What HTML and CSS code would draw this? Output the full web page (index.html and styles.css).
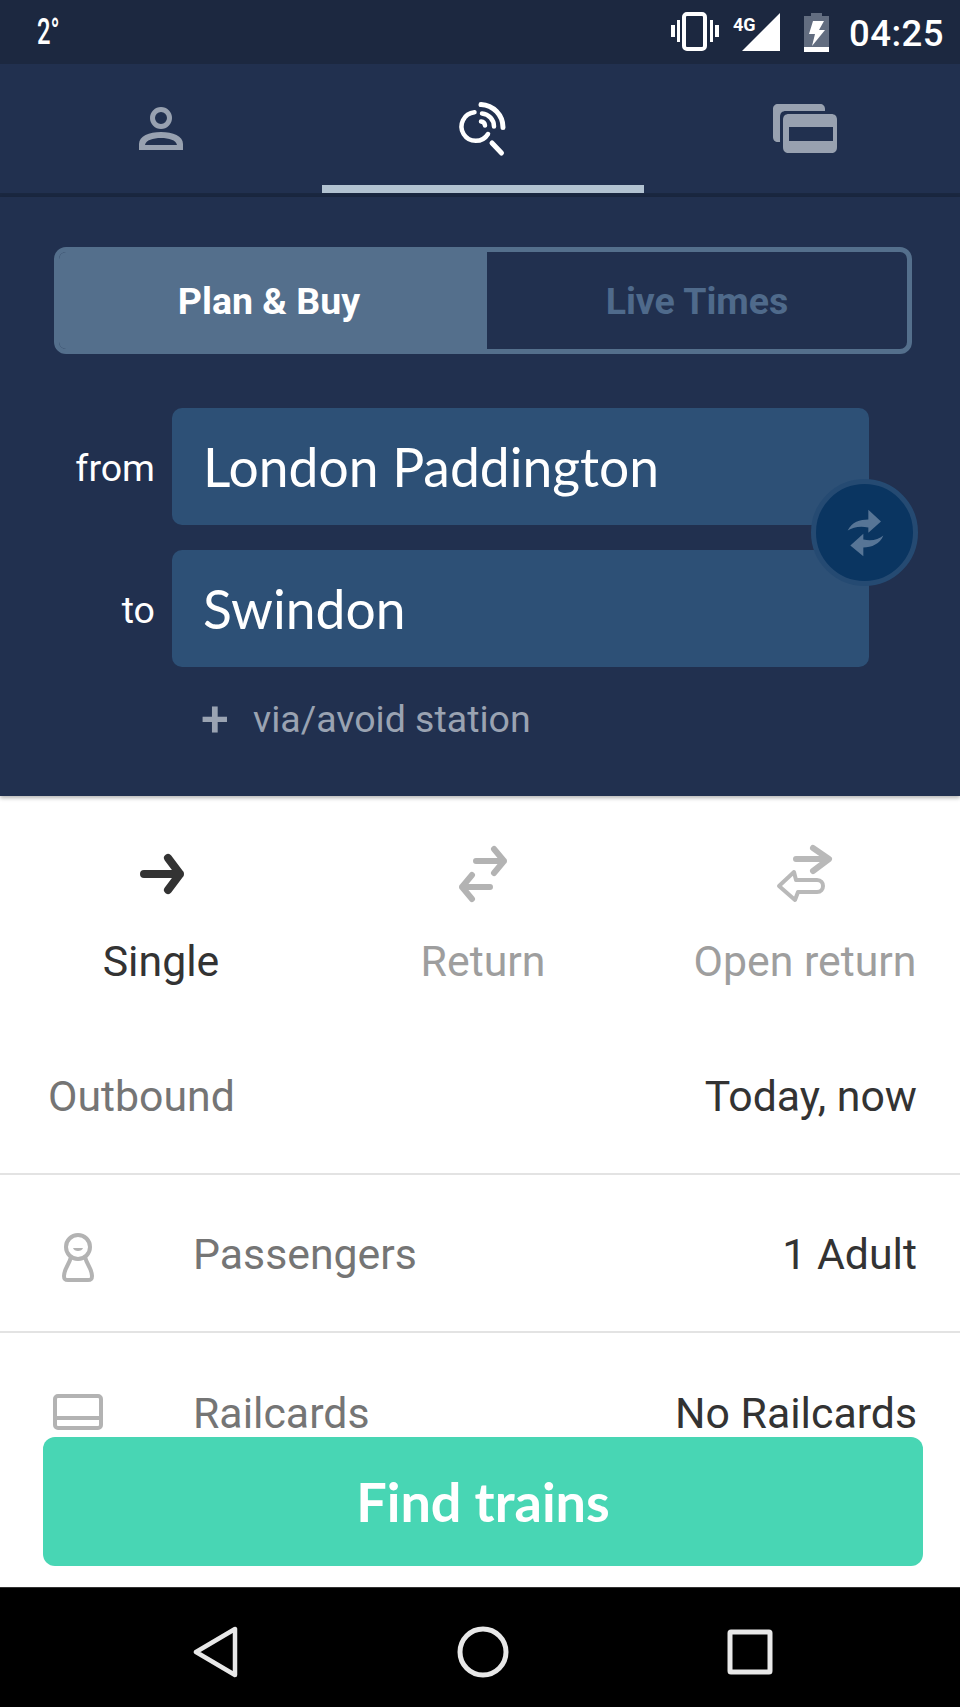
FILE: index.html
```html
<!DOCTYPE html>
<html lang="en">
<head>
  <meta charset="UTF-8">
  <meta name="viewport" content="width=device-width, initial-scale=1.0">
  <title>Find trains</title>
  <link rel="stylesheet" href="styles.css">
</head>
<body>
  <div class="screen">
    <div class="status-bar">
      <span class="temp">2°</span>
      <div class="status-right">
        <svg class="ic-vibrate" width="50" height="40" viewBox="0 0 50 40">
          <rect x="14" y="2" width="21" height="35" rx="3" fill="none" stroke="#fff" stroke-width="4"/>
          <path d="M1 13h4v12H1zM7 8h3v22H7zM40 8h3v22h-3zM45 13h4v12h-4z" fill="#fff"/>
        </svg>
        <div class="signal">
          <span class="net">4G</span>
          <svg width="38" height="38" viewBox="0 0 38 38"><path d="M38 0v38H0z" fill="#fff"/></svg>
        </div>
        <svg class="ic-battery" width="25" height="39" viewBox="0 0 25 39">
          <path d="M7 0h11v3h7v32H0V3h7z" fill="#626d80"/>
          <path d="M0 34h25v5H0z" fill="#fff"/>
          <path d="M9 8h11l-5 9h6L8 33l3-12H5z" fill="#fff"/>
        </svg>
        <span class="clock">04:25</span>
      </div>
    </div>

    <nav class="tabs">
      <div class="tab">
        <svg width="60" height="60" viewBox="0 0 60 60">
          <circle cx="30" cy="22" r="8.5" fill="none" stroke="#98a1b0" stroke-width="5"/>
          <path fill-rule="evenodd" d="M8 54v-6c0-8 10-12 22-12s22 4 22 12v6zM14 49h32c-1-5-8-7-16-7s-15 2-16 7z" fill="#98a1b0"/>
        </svg>
      </div>
      <div class="tab tab-active">
        <svg width="60" height="60" viewBox="0 0 60 60" fill="none" stroke="#fff" stroke-linecap="round">
          <path d="M21.5 13.3A14.3 14.3 0 1 0 35 35" stroke-width="4.5"/>
          <path d="M39 44L48.500 54" stroke-width="5"/>
          <path d="M28 5.5A23 23 0 0 1 50 28.5" stroke-width="5"/>
          <path d="M29 14.5A13 13 0 0 1 41 27.5" stroke-width="4.5"/>
          <path d="M28 22.5A4.5 4.5 0 0 1 32 26.5" stroke-width="4.5"/>
        </svg>
      </div>
      <div class="tab tab-cards">
        <svg width="66" height="50" viewBox="0 0 66 50">
          <path d="M6 0h42c3 0 5 2 5 5v2H14c-4 0-6 2-6 6v25H6c-3 0-5-2-5-5V5c0-3 2-5 5-5z" fill="#98a1b0"/>
          <path fill-rule="evenodd" d="M17 10h42c4 0 6 2 6 6v27c0 4-2 6-6 6H17c-4 0-6-2-6-6V16c0-4 2-6 6-6zM17 23v14h44V23z" fill="#98a1b0"/>
        </svg>
      </div>
    </nav>
    <div class="tabs-edge"></div>

    <section class="search-panel">
      <div class="segment">
        <div class="segment-item segment-on">Plan &amp; Buy</div>
        <div class="segment-item">Live Times</div>
      </div>

      <div class="stations">
        <div class="station-row">
          <span class="station-label">from</span>
          <div class="station-field">London Paddington</div>
        </div>
        <div class="station-row">
          <span class="station-label">to</span>
          <div class="station-field">Swindon</div>
        </div>
        <div class="swap">
          <svg width="40" height="52" viewBox="610 195 120 155">
            <path d="M618 265c12-25 37-33 62-33v-29l38 35-38 34v-16c-25-6-45-1-62 9z" fill="#577596"/>
            <path d="M725 280c-10 25-35 36-60 36v26l-39-32 39-35v17c25 6 45 0 60-12z" fill="#577596"/>
          </svg>
        </div>
      </div>

      <div class="via">
        <span class="via-plus">+</span>
        <span>via/avoid station</span>
      </div>
    </section>

    <main class="content">
      <div class="trip-types">
        <div class="trip-type trip-on">
          <svg width="60" height="60" viewBox="0 0 60 60" fill="none" stroke="#333" stroke-width="8" stroke-linecap="round" stroke-linejoin="round">
            <path d="M13 30h36M37 14l12 16-12 16" />
          </svg>
          <span>Single</span>
        </div>
        <div class="trip-type">
          <svg width="60" height="60" viewBox="0 0 60 60" fill="none" stroke="#b3b3b3" stroke-width="6" stroke-linecap="round" stroke-linejoin="round">
            <path d="M23 17h28M41 5l10 12-10 12M37 43H9M19 31L9 43l10 12" />
          </svg>
          <span>Return</span>
        </div>
        <div class="trip-type">
          <svg width="60" height="60" viewBox="0 0 60 60" fill="none" stroke="#b9b9b9" stroke-linecap="round" stroke-linejoin="round">
            <path d="M21 15h32M38 4l16 11-16 12" stroke-width="6"/>
            <path d="M19 28L4 42l16 14 3-8h19c8 0 8-12 0-12H21z" stroke-width="4"/>
          </svg>
          <span>Open return</span>
        </div>
      </div>

      <div class="row row-first">
        <span class="row-label">Outbound</span>
        <span class="row-value">Today, now</span>
      </div>
      <div class="row">
        <div class="row-icon">
          <svg class="ic-passenger" width="36" height="49" viewBox="0 0 36 49" fill="none" stroke="#b3b3b3" stroke-width="4">
            <circle cx="18" cy="14" r="12"/>
            <path d="M11 24C9 32 4 36 4 43c0 3 1 4 4 4h20c3 0 4-1 4-4 0-7-5-11-7-19"/>
            <path d="M13 15h10c-1 4-9 4-10 0z" fill="#b3b3b3" stroke="none"/>
          </svg>
        </div>
        <span class="row-label">Passengers</span>
        <span class="row-value">1 Adult</span>
      </div>
      <div class="row row-last">
        <div class="row-icon">
          <svg width="50" height="36" viewBox="0 0 50 36" fill="none" stroke="#b3b3b3" stroke-width="4">
            <rect x="2" y="2" width="46" height="32" rx="3"/>
            <path d="M2 24h46"/>
          </svg>
        </div>
        <span class="row-label">Railcards</span>
        <span class="row-value">No Railcards</span>
      </div>

      <button class="find-btn" type="button">Find trains</button>
    </main>

    <div class="android-nav">
      <svg width="46" height="52" viewBox="0 0 46 52" fill="none" stroke="#e8e8e8" stroke-width="4.5" stroke-linejoin="round">
        <path d="M42 3v46L3 26z"/>
      </svg>
      <svg width="52" height="52" viewBox="0 0 52 52" fill="none" stroke="#e8e8e8" stroke-width="5">
        <circle cx="26" cy="26" r="23"/>
      </svg>
      <svg width="46" height="46" viewBox="0 0 46 46" fill="none" stroke="#e8e8e8" stroke-width="5" stroke-linejoin="round">
        <rect x="3" y="3" width="40" height="40" rx="1"/>
      </svg>
    </div>
  </div>
</body>
</html>
```

FILE: styles.css
```css
html, body {
  margin: 0;
  padding: 0;
}
body {
  font-family: Roboto, "Liberation Sans", sans-serif;
  background-color: #fff;
}
.screen {
  width: 960px;
  height: 1707px;
  display: flex;
  flex-direction: column;
  overflow: hidden;
}

/* status bar */
.status-bar {
  height: 64px;
  flex: none;
  background-color: #1c2840;
  color: #fff;
  display: flex;
  align-items: center;
  justify-content: space-between;
  padding: 0 16px 0 37px;
}
.temp {
  font-size: 36px;
  font-weight: 500;
  transform: scaleX(0.66);
  transform-origin: left center;
}
.status-right {
  display: flex;
  align-items: center;
}
.ic-vibrate {
  margin-right: 12px;
}
.signal {
  position: relative;
  width: 48px;
  height: 38px;
  display: flex;
  justify-content: flex-end;
  margin-right: 24px;
}
.net {
  position: absolute;
  left: 1px;
  top: 1px;
  font-size: 18px;
  font-weight: 700;
}
.ic-battery {
  margin-right: 20px;
}
.clock {
  font-size: 36.5px;
  font-weight: 500;
  letter-spacing: 0.5px;
  padding-top: 2px;
}

/* top tabs */
.tabs {
  height: 129px;
  flex: none;
  background-color: #21304f;
  display: grid;
  grid-template-columns: 322px 322px 316px;
}
.tab {
  display: flex;
  align-items: center;
  justify-content: center;
  box-sizing: border-box;
  padding-bottom: 6px;
}
.tab-active {
  border-bottom: 8px solid #b2c2d1;
  padding: 8px 0 0;
}
.tab-cards {
  padding: 0 0 0 6px;
}
.tabs-edge {
  height: 4px;
  flex: none;
  background-color: #1a2740;
}

/* search panel */
.search-panel {
  height: 599px;
  flex: none;
  box-sizing: border-box;
  background-color: #21304f;
  padding-top: 50px;
  box-shadow: 0 2px 4px rgba(0, 0, 0, 0.3);
  position: relative;
  z-index: 1;
}
.segment {
  width: 858px;
  height: 107px;
  margin-left: 54px;
  box-sizing: border-box;
  border: 5px solid #546f8c;
  border-radius: 12px;
  display: grid;
  grid-template-columns: 428px 1fr;
  overflow: hidden;
}
.segment-item {
  display: flex;
  align-items: center;
  justify-content: center;
  font-size: 37.5px;
  font-weight: 700;
  color: #4f6a8b;
}
.segment-on {
  background-color: #546f8c;
  color: #fff;
  padding-right: 8px;
}
.stations {
  position: relative;
  margin-top: 54px;
  display: flex;
  flex-direction: column;
  gap: 25px;
}
.station-row {
  display: flex;
  align-items: center;
}
.station-label {
  width: 155px;
  text-align: right;
  font-size: 37.5px;
  color: #fff;
  margin-right: 17px;
  padding-top: 2px;
}
.station-field {
  width: 697px;
  height: 117px;
  box-sizing: border-box;
  padding: 0 31px 2px;
  display: flex;
  align-items: center;
  background-color: #2d5076;
  border-radius: 10px;
  color: #fff;
  font-family: Lato, sans-serif;
  font-size: 53.4px;
}
.swap {
  position: absolute;
  top: 71px;
  right: 42px;
  width: 107px;
  height: 107px;
  box-sizing: border-box;
  border: 5px solid #254a72;
  border-radius: 50%;
  background-color: #0a3561;
  display: flex;
  align-items: center;
  justify-content: center;
}
.via {
  margin-top: 28px;
  padding-left: 201px;
  display: flex;
  align-items: center;
  color: #9aa3b2;
  font-size: 37.5px;
  line-height: 48px;
}
.via-plus {
  width: 52px;
  font-size: 50px;
  font-weight: 500;
}

/* white part */
.content {
  flex: 1;
  min-height: 0;
  position: relative;
  overflow: hidden;
}
.trip-types {
  display: grid;
  grid-template-columns: repeat(3, 322px);
  padding-top: 48px;
}
.trip-type {
  display: flex;
  flex-direction: column;
  align-items: center;
  color: #9e9e9e;
  font-size: 42.8px;
}
.trip-type span {
  margin-top: 32px;
  line-height: 50px;
}
.trip-on {
  color: #333;
}
.row {
  height: 158px;
  box-sizing: border-box;
  border-bottom: 2px solid #e3e3e3;
  display: flex;
  align-items: center;
  padding: 0 43px 0 48px;
  font-size: 42.8px;
}
.row-first {
  margin-top: 31px;
}
.row-last {
  border-bottom: none;
}
.row-label, .row-value {
  padding-top: 2px;
}
.row-icon {
  width: 60px;
  margin-right: 85px;
  flex: none;
  display: flex;
  justify-content: center;
}
.ic-passenger {
  margin-top: 9px;
}
.row-label {
  color: #757575;
}
.row-value {
  margin-left: auto;
  color: #333;
}
.find-btn {
  position: absolute;
  left: 43px;
  right: 37px;
  bottom: 21px;
  height: 129px;
  border: none;
  border-radius: 12px;
  background-color: #48d6b4;
  color: #fff;
  font-family: Lato, sans-serif;
  font-size: 54px;
  font-weight: 700;
}

/* android buttons */
.android-nav {
  height: 120px;
  flex: none;
  box-sizing: border-box;
  background-color: #000;
  border-top: 1px solid #333;
  padding: 9px 76.5px 0 82.5px;
  display: grid;
  grid-template-columns: repeat(3, 1fr);
  align-items: center;
  justify-items: center;
}
```
